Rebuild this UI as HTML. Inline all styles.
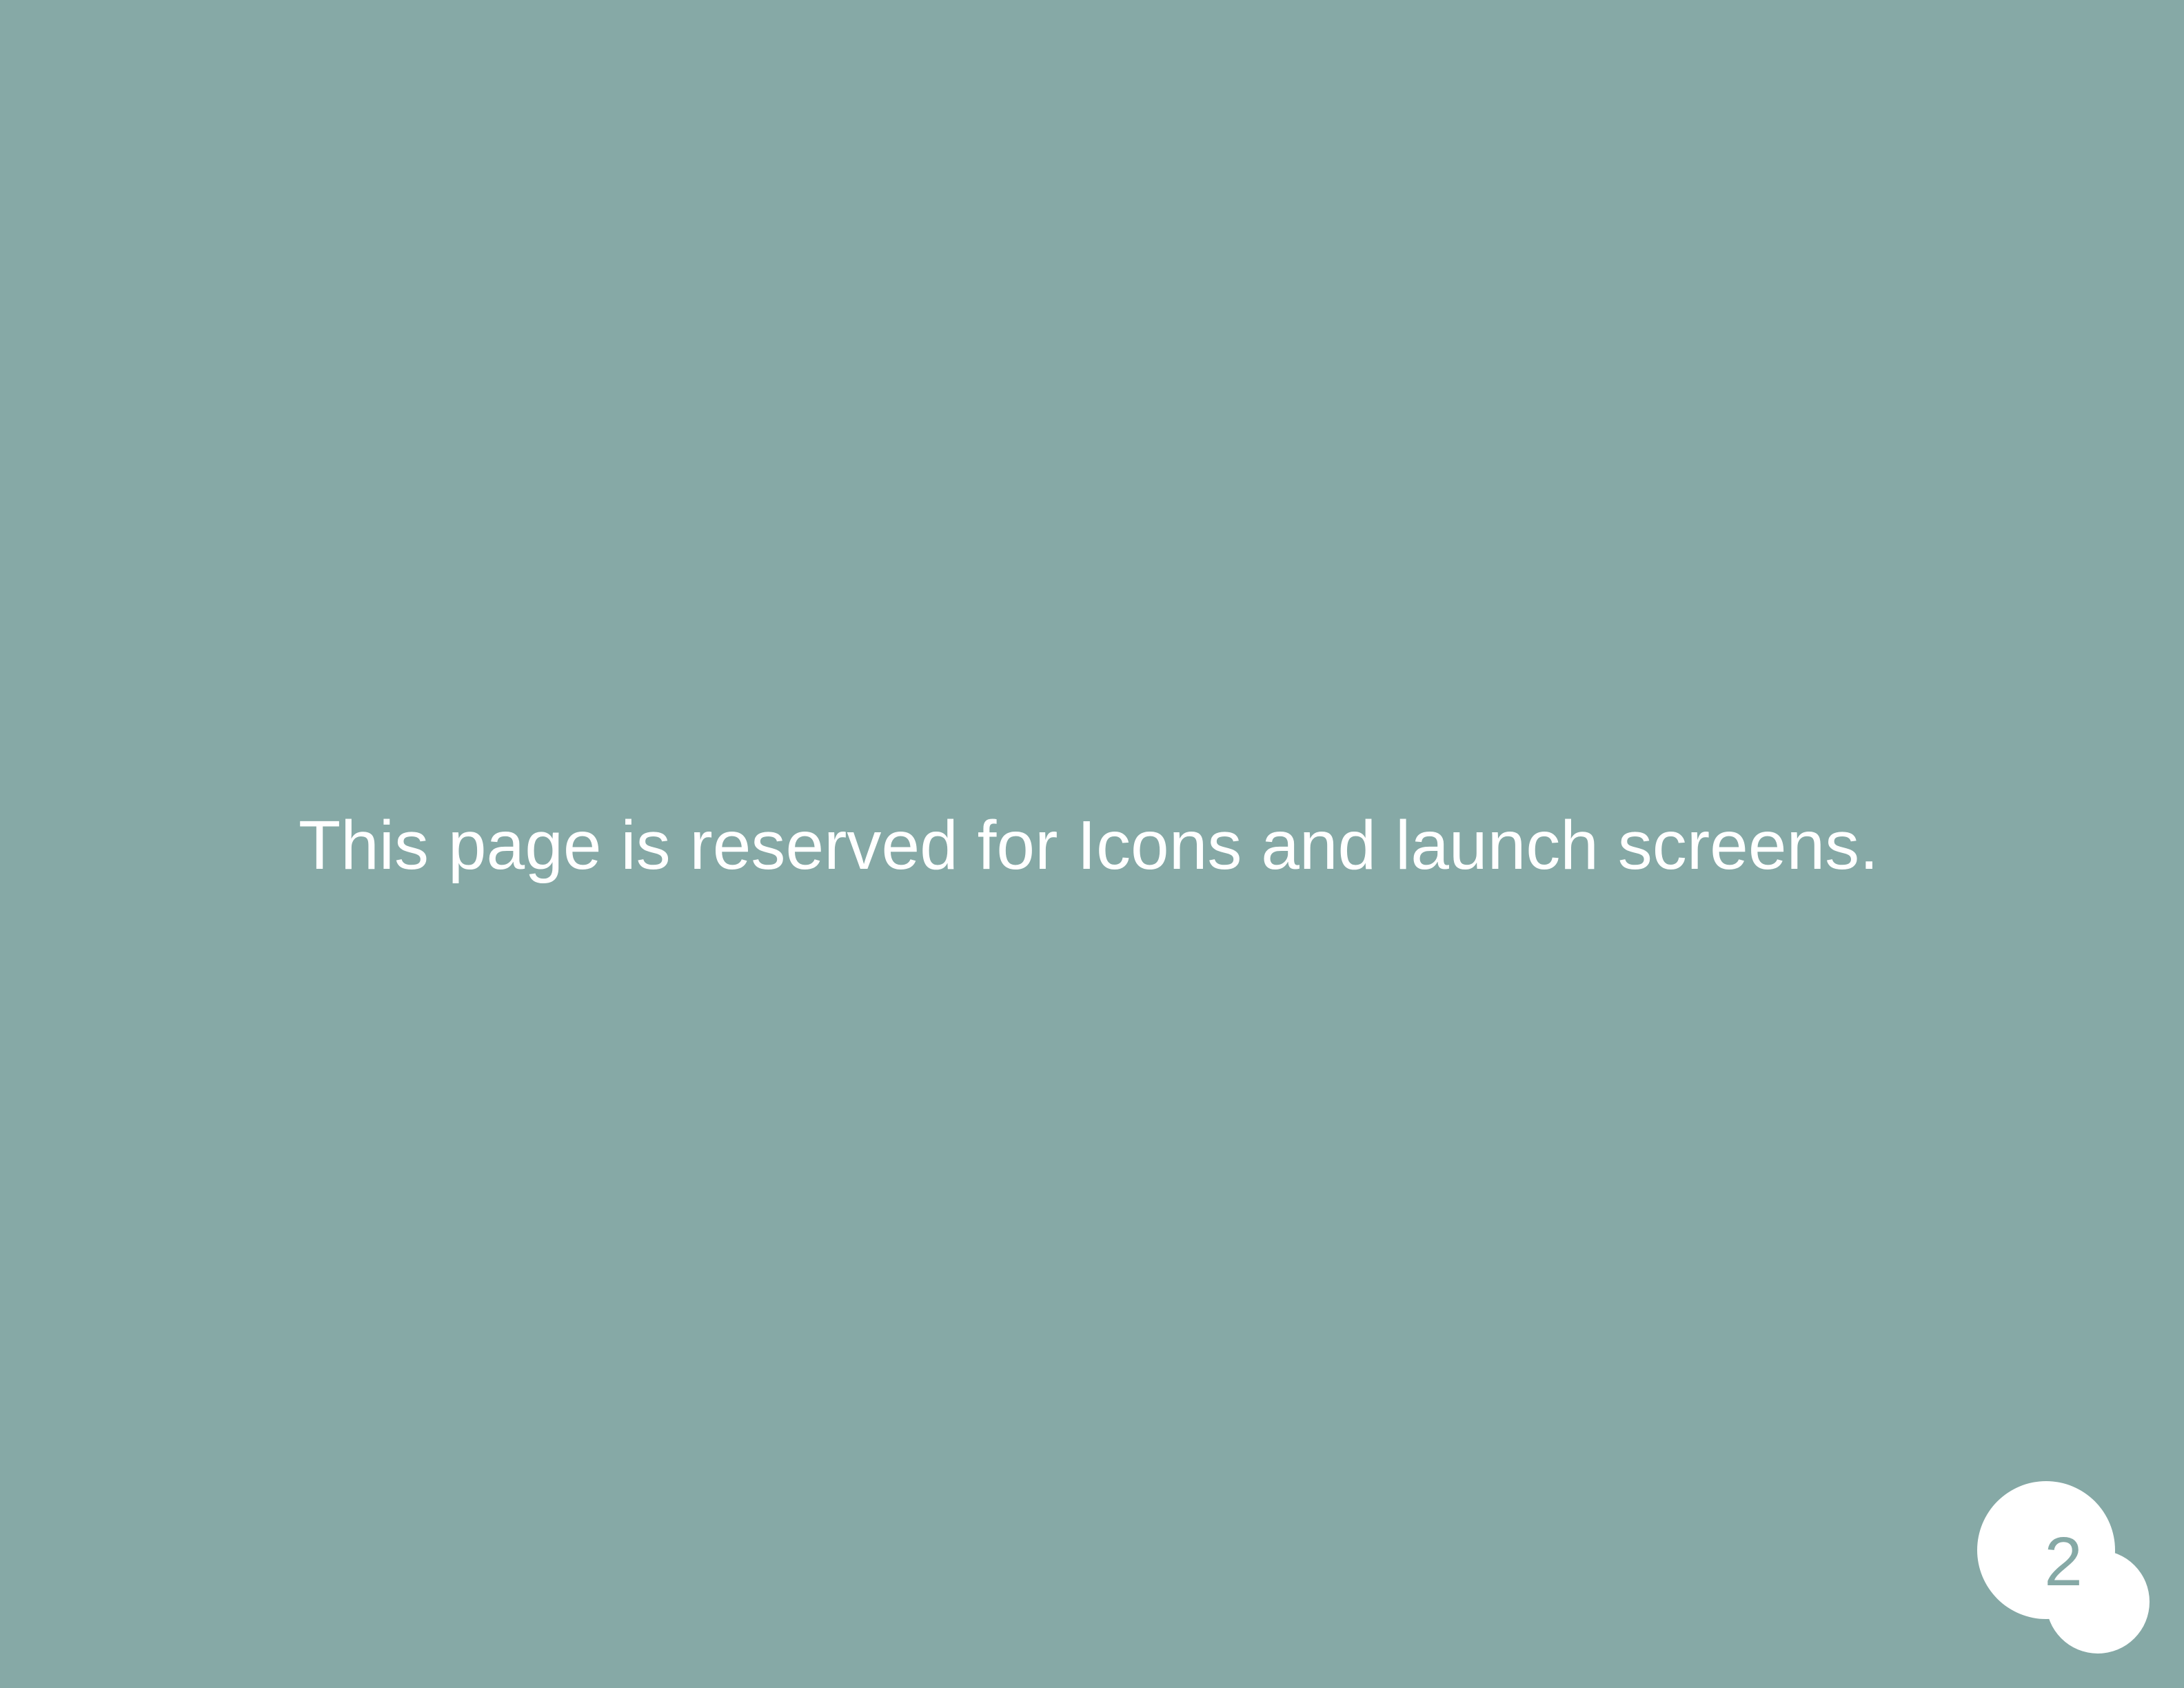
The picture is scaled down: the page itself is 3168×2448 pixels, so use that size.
<!DOCTYPE html>
<html><head><meta charset="utf-8"><style>
html,body{margin:0;padding:0;}
body{width:3168px;height:2448px;background:#86a9a6;overflow:hidden;position:relative;}
svg{position:absolute;left:0;top:0;}
</style></head><body>
<svg width="3168" height="2448" viewBox="0 0 3168 2448">
<rect width="3168" height="2448" fill="#86a9a6"/>
<text x="433" y="1260" font-family="Liberation Sans, Arial, sans-serif" font-size="100" fill="#ffffff" textLength="2292" lengthAdjust="spacingAndGlyphs">This page is reserved for Icons and launch screens.</text>
<circle cx="2968" cy="2248" r="100" fill="#fff"/>
<circle cx="3043" cy="2323" r="75" fill="#fff"/>
<text x="2993" y="2299" text-anchor="middle" font-family="Liberation Sans, Arial, sans-serif" font-size="100" fill="#86a9a6">2</text>
</svg>
</body></html>
